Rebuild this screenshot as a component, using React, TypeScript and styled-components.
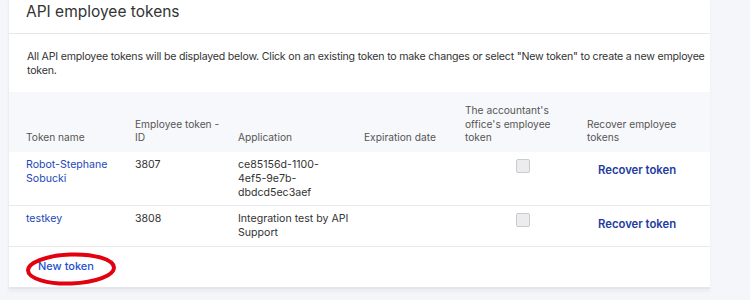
import { createGlobalStyle, styled } from "styled-components";

const GlobalStyle = createGlobalStyle`
  html, body {
    margin: 0;
    padding: 0;
    background: #f5f6fa;
    font-family: Inter, "Liberation Sans", sans-serif;
    color: #333;
  }
`;

const Page = styled.div`
  width: 750px;
  height: 300px;
  padding-left: 8px;
  padding-right: 40px;
  box-sizing: border-box;
  overflow: hidden;
`;

const Card = styled.div`
  background: #fff;
  border-left: 1px solid #eceef2;
  border-bottom: 2px solid #e4e6ea;
  box-shadow: 0 3px 3px rgba(0, 0, 0, 0.04);
  position: relative;
`;

const Header = styled.div`
  height: 34px;
  padding: 0 17px;
  border-bottom: 1px solid #e6e7ea;
  box-sizing: border-box;
`;

const Title = styled.h2`
  margin: 0;
  font-size: 15.5px;
  line-height: 24px;
  font-weight: 400;
  color: #333;
`;

const Intro = styled.p`
  margin: 0;
  padding: 16px 2px 14px 18px;
  font-size: 10.6px;
  line-height: 14px;
  letter-spacing: -0.2px;
  color: #333;
`;

const Table = styled.table`
  width: 100%;
  border-collapse: collapse;
  table-layout: fixed;
  font-size: 10.6px;
  line-height: 13.7px;
`;

const HeadCell = styled.th`
  background: #f7f8fb;
  color: #555;
  font-size: 10.2px;
  font-weight: 400;
  text-align: left;
  vertical-align: bottom;
  padding: 12px 12px 7px 0;

  &:first-child {
    padding-left: 17px;
  }
`;

const Row = styled.tr`
  border-bottom: 1px solid #e8e9ec;
`;

const Cell = styled.td<{ $pad?: number }>`
  vertical-align: top;
  padding: 6px 10px 6px ${(p) => p.$pad ?? 0}px;
  color: #333;

  &:first-child {
    padding-left: 17px;
  }
`;

const NameLink = styled.a`
  color: #2348b8;
  text-decoration: none;
`;

// uuids wrap on their hyphens in a narrower box than plain app names
const Uuid = styled.span`
  display: block;
  max-width: 92px;
`;

const Check = styled.span`
  display: block;
  width: 12px;
  height: 12px;
  margin-top: 1px;
  border: 1px solid #c9cbcf;
  border-radius: 2px;
  background: #ececee;
`;

const RecoverButton = styled.a`
  display: inline-block;
  margin-top: 6px;
  font-size: 11.3px;
  font-weight: 600;
  color: #1e3b9e;
  text-decoration: none;
`;

const NewToken = styled.a`
  display: inline-block;
  margin: 12px 0 0 29px;
  font-size: 11px;
  font-weight: 500;
  color: #2650d0;
  text-decoration: none;
`;

const Footer = styled.div`
  height: 40px;
  position: relative;
`;

const Annotation = styled.svg`
  position: absolute;
  left: 14px;
  top: 3px;
  pointer-events: none;
`;

const tokens = [
  {
    name: "Robot-Stephane Sobucki",
    id: "3807",
    app: "ce85156d-1100-4ef5-9e7b-dbdcd5ec3aef",
  },
  { name: "testkey", id: "3808", app: "Integration test by API Support" },
];

const isUuid = (s: string) => /^[0-9a-f]{8}-[0-9a-f-]+$/.test(s);

function App() {
  return (
    <>
      <GlobalStyle />
      <Page>
        <Card>
          <Header>
            <Title>API employee tokens</Title>
          </Header>
          <Intro>
            All API employee tokens will be displayed below. Click on an
            existing token to make changes or select "New token" to create a
            new employee token.
          </Intro>
          <Table>
            <colgroup>
              <col style={{ width: 126 }} />
              <col style={{ width: 103 }} />
              <col style={{ width: 126 }} />
              <col style={{ width: 101 }} />
              <col style={{ width: 122 }} />
              <col />
            </colgroup>
            <thead>
              <tr>
                <HeadCell>Token name</HeadCell>
                <HeadCell>Employee token - ID</HeadCell>
                <HeadCell>Application</HeadCell>
                <HeadCell>Expiration date</HeadCell>
                <HeadCell>The accountant's office's employee token</HeadCell>
                <HeadCell>Recover employee tokens</HeadCell>
              </tr>
            </thead>
            <tbody>
              {tokens.map((t) => (
                <Row key={t.id}>
                  <Cell>
                    <NameLink href="#">{t.name}</NameLink>
                  </Cell>
                  <Cell>{t.id}</Cell>
                  <Cell>{isUuid(t.app) ? <Uuid>{t.app}</Uuid> : t.app}</Cell>
                  <Cell />
                  <Cell $pad={51}>
                    <Check />
                  </Cell>
                  <Cell $pad={11}>
                    <RecoverButton href="#">Recover token</RecoverButton>
                  </Cell>
                </Row>
              ))}
            </tbody>
          </Table>
          <Footer>
            <NewToken href="#">New token</NewToken>
            {/* red hand-drawn circle from the screenshot */}
            <Annotation width="96" height="38" viewBox="0 0 96 38">
              <ellipse
                cx="48"
                cy="19"
                rx="43"
                ry="14.5"
                fill="none"
                stroke="#e3000f"
                strokeWidth="4"
                transform="rotate(-2 48 19)"
              />
            </Annotation>
          </Footer>
        </Card>
      </Page>
    </>
  );
}

export default App;
